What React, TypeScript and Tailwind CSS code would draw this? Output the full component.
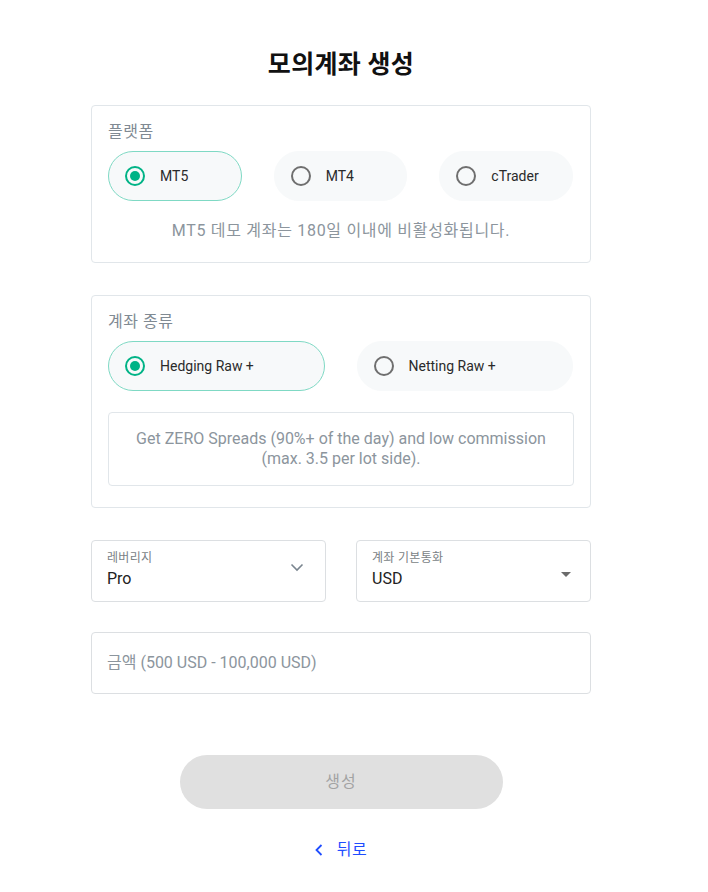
import React from "react";

const font = { fontFamily: 'Roboto, "Noto Sans CJK KR", sans-serif' };

function Radio({ checked }: { checked: boolean }) {
  return checked ? (
    <span className="flex h-5 w-5 items-center justify-center rounded-full border-2 border-[#00b386]">
      <span className="h-[10px] w-[10px] rounded-full bg-[#00b386]" />
    </span>
  ) : (
    <span className="h-5 w-5 rounded-full border-2 border-[#6f6f6f]" />
  );
}

function Pill({ label, checked }: { label: string; checked: boolean }) {
  return (
    <div
      className={
        "flex h-[50px] items-center gap-[15px] rounded-full bg-[#f7f9fa] pl-4 text-sm text-[#2a2a2a] " +
        (checked ? "border border-[#7fd9c4]" : "border border-[#f7f9fa]")
      }
    >
      <Radio checked={checked} />
      <span>{label}</span>
    </div>
  );
}

export default function App() {
  return (
    <div className="min-h-[892px] w-full bg-white" style={font}>
      <div className="ml-[91px] flex w-[500px] flex-col pt-[48px]">
        <h1 className="text-center text-[25px] font-bold leading-[34px] tracking-[0.3px] text-[#111]">모의계좌 생성</h1>

        <div className="mt-[23px] rounded border border-[#e1e6ea] px-4 pb-[19px] pt-[14px]">
          <div className="text-base leading-6 tracking-[0.5px] text-[#808a93]">플랫폼</div>
          <div className="mt-[7px] grid grid-cols-3 gap-[32px] pr-[1px]">
            <Pill label="MT5" checked />
            <Pill label="MT4" checked={false} />
            <Pill label="cTrader" checked={false} />
          </div>
          <div className="mt-[18px] text-center text-base leading-6 tracking-[0.7px] text-[#8c959d]">
            MT5 데모 계좌는 180일 이내에 비활성화됩니다.
          </div>
        </div>

        <div className="mt-[32px] rounded border border-[#e1e6ea] px-4 pb-[21px] pt-[14px]">
          <div className="text-base leading-6 tracking-[0.5px] text-[#808a93]">계좌 종류</div>
          <div className="mt-[7px] grid grid-cols-2 gap-[32px] pr-[1px]">
            <Pill label="Hedging Raw +" checked />
            <Pill label="Netting Raw +" checked={false} />
          </div>
          <div className="mt-[21px] rounded border border-[#e1e6ea] px-4 py-[16px] text-center text-base leading-5 text-[#8c959d]">
            Get ZERO Spreads (90%+ of the day) and low commission
            <br />
            (max. 3.5 per lot side).
          </div>
        </div>

        <div className="mt-[32px] grid grid-cols-2 gap-[30px]">
          <div className="relative h-[62px] rounded border border-[#dcdfe2] px-[15px] pt-[9px]">
            <div className="text-xs leading-4 tracking-[0.3px] text-[#7a7f85]">레버리지</div>
            <div className="mt-[1px] text-base leading-6 text-[#222]">Pro</div>
            <svg className="absolute right-[21px] top-[22px]" width="14" height="9" viewBox="0 0 14 9" fill="none">
              <path d="M1.5 1.5 L7 7 L12.5 1.5" stroke="#7a858f" strokeWidth="1.6" />
            </svg>
          </div>
          <div className="relative h-[62px] rounded border border-[#dcdfe2] px-[15px] pt-[9px]">
            <div className="text-xs leading-4 tracking-[0.3px] text-[#7a7f85]">계좌 기본통화</div>
            <div className="mt-[1px] text-base leading-6 text-[#222]">USD</div>
            <svg className="absolute right-[19px] top-[31px]" width="10" height="5" viewBox="0 0 10 5">
              <path d="M0 0 L10 0 L5 5 Z" fill="#6b6b6b" />
            </svg>
          </div>
        </div>

        <div className="mt-[30px] flex h-[62px] items-center rounded border border-[#dcdfe2] px-[15px]">
          <span className="text-base text-[#8c959d]">금액 (500 USD - 100,000 USD)</span>
        </div>

        <div className="mt-[61px] flex justify-center">
          <button className="h-[54px] w-[323px] rounded-full bg-[#e0e0e0] text-base tracking-[1px] text-[#a3a3a3]">생성</button>
        </div>

        <div className="mt-[29px] flex items-center justify-center gap-[14px] text-base tracking-[0.5px] text-[#1f4dff]">
          <svg width="8" height="12" viewBox="0 0 8 12" fill="none">
            <path d="M6.5 1 L1.5 6 L6.5 11" stroke="#1f4dff" strokeWidth="1.8" />
          </svg>
          <span>뒤로</span>
        </div>
      </div>
    </div>
  );
}
